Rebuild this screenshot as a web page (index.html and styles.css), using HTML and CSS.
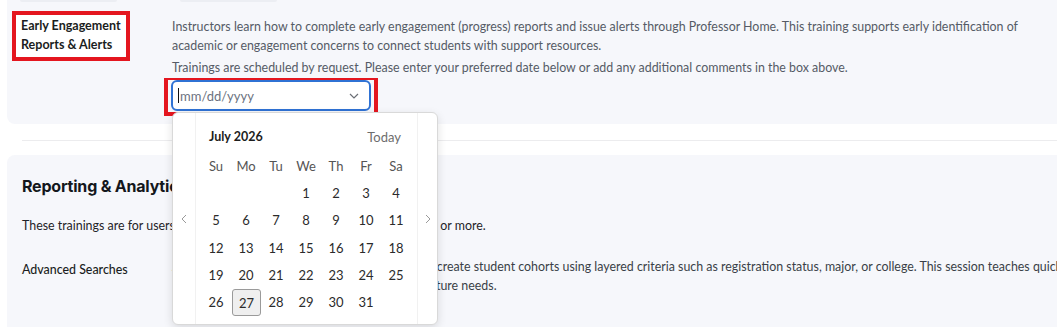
FILE: index.html
```html
<!DOCTYPE html>
<html lang="en">
<head>
    <meta charset="UTF-8">
    <meta name="viewport" content="width=device-width, initial-scale=1.0">
    <title>Training Requests</title>
    <link rel="stylesheet" href="styles.css">
</head>
<body>
    <div class="page">
        <!-- Early engagement section -->
        <div class="card card-top">
            <div class="edge-row">
                <span class="edge edge-left"></span>
                <span class="edge edge-right"></span>
            </div>
            <div class="row">
                <div class="label-col">
                    <span class="label marked">Early Engagement<br>Reports &amp; Alerts</span>
                </div>
                <div class="desc-col desc-col-top">
                    <p class="desc first">Instructors learn how to complete early engagement (progress) reports and issue alerts through Professor Home. This training supports early identification of academic or engagement concerns to connect students with support resources.</p>
                    <p class="desc">Trainings are scheduled by request. Please enter your preferred date below or add any additional comments in the box above.</p>

                    <div class="date-wrap">
                        <div class="date-input">
                            <span class="caret"></span>
                            <span class="placeholder">mm/dd/yyyy</span>
                            <svg class="chevron" width="10" height="6" viewBox="0 0 10 6" fill="none" stroke="#6b6f76" stroke-width="1.2">
                                <polyline points="1,1 5,5 9,1"/>
                            </svg>
                        </div>

                        <!-- native-style date picker popup -->
                        <div class="calendar">
                            <div class="cal-nav">
                                <svg width="6" height="10" viewBox="0 0 6 10" fill="none" stroke="#9a9a9a" stroke-width="1">
                                    <polyline points="5,1 1,5 5,9"/>
                                </svg>
                            </div>
                            <div class="cal-panel">
                                <div class="cal-head">
                                    <span class="cal-month">July 2026</span>
                                    <span class="cal-today">Today</span>
                                </div>
                                <div class="cal-grid">
                                    <span class="wd">Su</span><span class="wd">Mo</span><span class="wd">Tu</span><span class="wd">We</span><span class="wd">Th</span><span class="wd">Fr</span><span class="wd">Sa</span>
                                    <span></span><span></span><span></span><span>1</span><span>2</span><span>3</span><span>4</span>
                                    <span>5</span><span>6</span><span>7</span><span>8</span><span>9</span><span>10</span><span>11</span>
                                    <span>12</span><span>13</span><span>14</span><span>15</span><span>16</span><span>17</span><span>18</span>
                                    <span>19</span><span>20</span><span>21</span><span>22</span><span>23</span><span>24</span><span>25</span>
                                    <span>26</span><span class="current">27</span><span>28</span><span>29</span><span>30</span><span>31</span><span></span>
                                </div>
                            </div>
                            <div class="cal-nav">
                                <svg width="6" height="10" viewBox="0 0 6 10" fill="none" stroke="#9a9a9a" stroke-width="1">
                                    <polyline points="1,1 5,5 1,9"/>
                                </svg>
                            </div>
                        </div>
                    </div>
                </div>
            </div>
        </div>

        <div class="divider"></div>

        <!-- Reporting section -->
        <div class="card card-bottom">
            <h2 class="section-title">Reporting &amp; Analytics</h2>
            <p class="intro">These trainings are for users who build reports or run searches once a month or more.</p>
            <div class="row">
                <div class="label-col">
                    <span class="label plain">Advanced Searches</span>
                </div>
                <div class="desc-col desc-col-bottom">
                    <p class="desc dark">Advanced Searches help staff locate records and create student cohorts using layered criteria such as registration status, major, or college. This session teaches quickly how to build, save and reuse searches to meet future needs.</p>
                </div>
            </div>
        </div>
    </div>
</body>
</html>
```

FILE: styles.css
```css
body {
    margin: 0;
    background: #ffffff;
    overflow: hidden;
    font-family: Lato, "Liberation Sans", Arial, sans-serif;
    color: #1f2328;
}

.page {
    width: 1120px;
}

p {
    margin: 0;
}

/* cards */
.card {
    margin-left: 7px;
    background: #f6f7fb;
}

.card-top {
    border-radius: 0 0 0 8px;
    padding: 0 0 8px 15px;
}

.card-bottom {
    border-radius: 8px 0 0 0;
    padding: 21px 0 40px 15px;
}

/* bits of the section above peeking in */
.edge-row {
    display: flex;
    height: 2px;
}

.edge {
    height: 2px;
    background: #eceef3;
    border-radius: 0 0 6px 6px;
}

.edge-left {
    width: 97px;
    margin-left: -2px;
}

.edge-right {
    width: 97px;
    margin-left: 63px;
}

.row {
    display: flex;
    align-items: flex-start;
}

.card-top .row {
    padding-top: 15px;
}

.label-col {
    flex: 0 0 150px;
}

.label {
    display: inline-block;
    font-size: 12.5px;
    line-height: 19px;
    color: #1a1d21;
}

.label.marked {
    font-weight: 700;
    border: 4px solid #e4161f;
    margin: -6px 0 0 -10px;
    padding: 1px 5px 3px 5px;
    background: #ffffff;
}

.label.plain {
    font-weight: 500;
    font-size: 12.4px;
}

.desc-col-top {
    flex: 0 0 870px;
}

.desc-col-bottom {
    flex: 0 0 920px;
}

.desc {
    font-size: 12.4px;
    line-height: 19px;
    color: #555b66;
}

.desc.first {
    margin-bottom: 3px;
}

.desc.dark {
    line-height: 18.5px;
    color: #3a3f47;
}

/* date field with annotation box */
.date-wrap {
    position: relative;
    display: inline-block;
    margin: 1px 0 0 -8px;
    border: 4px solid #e4161f;
    border-top-width: 2px;
    padding: 0 3px 1px 3px;
}

.date-input {
    width: 200px;
    height: 31px;
    box-sizing: border-box;
    border: 2px solid #2f72d4;
    border-radius: 6px;
    background: #ffffff;
    display: flex;
    align-items: center;
    padding: 0 10px 0 5px;
}

.caret {
    width: 1px;
    height: 15px;
    background: #111;
}

.placeholder {
    flex: 1;
    font-size: 13px;
    color: #6b7280;
    padding-left: 1px;
}

/* calendar popup */
.calendar {
    position: absolute;
    left: 4px;
    top: 32px;
    width: 266px;
    height: 213px;
    box-sizing: border-box;
    display: flex;
    background: #ffffff;
    border: 1px solid #d9d9d9;
    border-radius: 6px;
    box-shadow: 0 3px 10px rgba(0, 0, 0, 0.12);
    z-index: 5;
}

.cal-nav {
    display: flex;
    align-items: center;
    justify-content: center;
}

.cal-nav:first-child {
    width: 22px;
    border-right: 1px solid #f1f1f1;
}

.cal-nav:last-child {
    width: 19px;
    border-left: 1px solid #f1f1f1;
}

.cal-panel {
    flex: 1;
    padding: 0 5px;
}

.cal-head {
    display: flex;
    justify-content: space-between;
    align-items: center;
    padding: 8px 11px 0 8px;
    height: 31px;
    font-size: 12.5px;
}

.cal-month {
    font-weight: 700;
    color: #1d1d1d;
}

.cal-today {
    font-size: 13px;
    color: #6d6d6d;
}

.cal-grid {
    display: grid;
    grid-template-columns: repeat(7, 30px);
    grid-auto-rows: 27.3px;
    font-size: 13px;
    color: #2b2b2b;
}

.cal-grid span {
    display: flex;
    align-items: center;
    justify-content: center;
}

.cal-grid .wd {
    color: #555555;
}

.cal-grid .current {
    margin: 1px 0 0 1px;
    border: 1px solid #9a9a9a;
    border-radius: 3px;
    background: #efefef;
}

/* divider and second section */
.divider {
    height: 1px;
    background: #ececee;
    margin: 16px 0 14px 22px;
}

.section-title {
    margin: 0;
    font-family: Inter, "Liberation Sans", Arial, sans-serif;
    font-size: 16px;
    line-height: 20px;
    font-weight: 700;
    color: #14171c;
    letter-spacing: -0.2px;
}

.intro {
    margin: 20px 0 23px 0;
    font-size: 12.4px;
    line-height: 19px;
    color: #1f2328;
}
```
